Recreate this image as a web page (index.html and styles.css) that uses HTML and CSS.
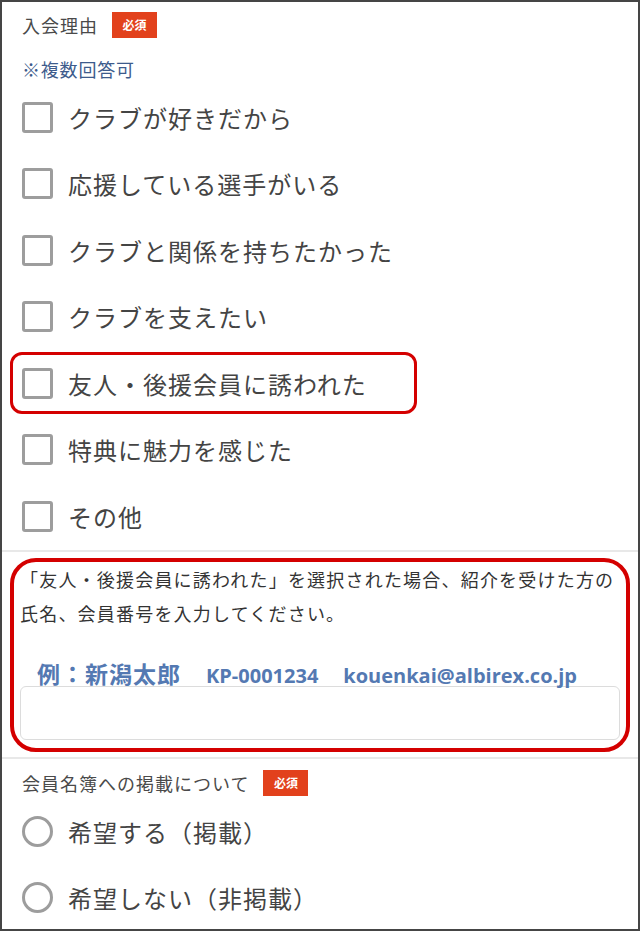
FILE: index.html
```html
<!DOCTYPE html>
<html lang="ja">
<head>
  <meta charset="UTF-8">
  <meta name="viewport" content="width=device-width, initial-scale=1.0">
  <title>入会申込</title>
  <link rel="stylesheet" href="styles.css">
</head>
<body>

<div class="page">
  <section class="field">
    <div class="field-label">入会理由<span class="badge">必須</span></div>
    <p class="note">※複数回答可</p>
    <ul class="choices">
      <li class="choice"><span class="check"></span>クラブが好きだから</li>
      <li class="choice"><span class="check"></span>応援している選手がいる</li>
      <li class="choice"><span class="check"></span>クラブと関係を持ちたかった</li>
      <li class="choice"><span class="check"></span>クラブを支えたい</li>
      <li class="choice marked"><span class="check"></span>友人・後援会員に誘われた</li>
      <li class="choice"><span class="check"></span>特典に魅力を感じた</li>
      <li class="choice"><span class="check"></span>その他</li>
    </ul>
  </section>

  <section class="field referral">
    <div class="callout">
      <p class="desc">「友人・後援会員に誘われた」を選択された場合、紹介を受けた方の氏名、会員番号を入力してください。</p>
      <p class="example">
        <span class="ex-name">例：新潟太郎</span>
        <span>KP-0001234</span>
        <span>kouenkai@albirex.co.jp</span>
      </p>
      <input type="text" class="text-input">
    </div>
  </section>

  <section class="field">
    <div class="field-label">会員名簿への掲載について<span class="badge">必須</span></div>
    <ul class="choices">
      <li class="choice"><span class="radio"></span>希望する（掲載）</li>
      <li class="choice"><span class="radio"></span>希望しない（非掲載）</li>
    </ul>
  </section>
</div>

</body>
</html>
```

FILE: styles.css
```css
/* 基本 */
html, body {
  margin: 0;
  padding: 0;
  background-color: #fff;
}
body {
  font-family: "Noto Sans CJK JP", sans-serif;
  color: #444;
}
.page {
  height: 931px;
  box-sizing: border-box;
  border: 2px solid #454545;
  overflow: hidden;
}
.field {
  padding: 10px 0 0 20px;
}
.field + .field {
  border-top: 2px solid #e8e8e8;
}
.field-label {
  display: flex;
  align-items: center;
  height: 26px;
  font-size: 18px;
  letter-spacing: 1px;
  color: #4a4a4a;
}
.badge {
  display: inline-block;
  margin-left: 14px;
  width: 45px;
  height: 26px;
  line-height: 26px;
  text-align: center;
  background-color: #e2411c;
  color: #fff;
  font-size: 12px;
  font-weight: bold;
  letter-spacing: 0;
}
.note {
  margin: 18px 0 0;
  height: 26px;
  line-height: 26px;
  font-size: 18px;
  letter-spacing: 0.8px;
  color: #3d5b8c;
}
.choices {
  list-style: none;
  margin: 2px 0 0;
  padding: 0;
}
.choice {
  position: relative;
  display: flex;
  align-items: center;
  height: 66.5px;
  font-size: 24px;
  letter-spacing: 1px;
  color: #444;
}
.check, .radio {
  flex: none;
  width: 31px;
  height: 31px;
  box-sizing: border-box;
  border: 3px solid #9d9d9d;
  margin-right: 15px;
}
.check {
  border-radius: 3px;
}
.radio {
  border-radius: 50%;
}
/* 赤枠の注釈 */
.marked::after {
  content: "";
  position: absolute;
  left: -12px;
  top: 2px;
  width: 407px;
  height: 62px;
  box-sizing: border-box;
  border: 3px solid #d40000;
  border-radius: 12px;
}
.referral {
  padding: 6px 8px 5px 8px;
}
.callout {
  border: 4px solid #d40000;
  border-radius: 26px;
  padding: 0 6px 8px 6px;
}
.desc {
  margin: 0;
  font-size: 18px;
  line-height: 34px;
  letter-spacing: 1.2px;
  color: #333;
}
.example {
  display: flex;
  align-items: baseline;
  gap: 25px;
  margin: 26px 0 0 17px;
  height: 30px;
  font-family: "Open Sans", "Noto Sans CJK JP", sans-serif;
  font-size: 20px;
  font-weight: bold;
  color: #5479b2;
}
.ex-name {
  font-family: "Noto Sans CJK JP", sans-serif;
  font-size: 23px;
  letter-spacing: 1px;
}
.text-input {
  display: block;
  width: 100%;
  height: 54px;
  box-sizing: border-box;
  border: 1px solid #dcdcdc;
  border-radius: 6px;
  margin-top: 0;
}
.field:last-child .field-label {
  margin-top: 1px;
}
.field:last-child .choices {
  margin-top: 3px;
}
.field:last-child .choice {
  height: 66px;
}
```
